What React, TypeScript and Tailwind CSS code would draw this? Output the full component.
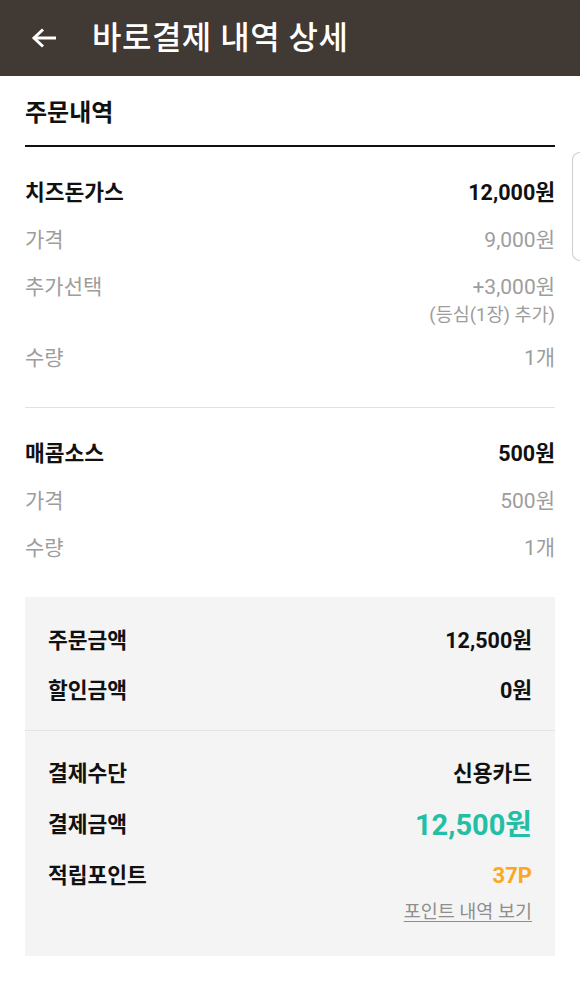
const FONT = "font-['Roboto','Noto_Sans_CJK_KR',sans-serif]"

interface Row {
  label: string
  value: string
  sub?: string
}

const ITEMS: { rows: Row[] }[] = [
  {
    rows: [
      { label: '치즈돈가스', value: '12,000원' },
      { label: '가격', value: '9,000원' },
      { label: '추가선택', value: '+3,000원', sub: '(등심(1장) 추가)' },
      { label: '수량', value: '1개' },
    ],
  },
  {
    rows: [
      { label: '매콤소스', value: '500원' },
      { label: '가격', value: '500원' },
      { label: '수량', value: '1개' },
    ],
  },
]

function ItemBlock({ rows, divider }: { rows: Row[]; divider?: boolean }) {
  return (
    <div className={`flex flex-col gap-[19px] pt-[32px] pb-[35px] ${divider ? 'border-b border-[#e2e2e2]' : ''}`}>
      {rows.map((r, i) => {
        const head = i === 0
        const tone = head ? 'text-[21.5px] font-bold text-[#111]' : 'text-[21px] text-[#9d9d9d]'
        return (
          <div key={i} className="flex justify-between items-start">
            <span className={`leading-[28px] ${tone}`}>{r.label}</span>
            <div className="flex flex-col items-end">
              <span className={`leading-[28px] ${tone}`}>{r.value}</span>
              {r.sub && (
                <span className="text-[18.5px] leading-[20px] mt-[4px] text-[#9d9d9d]">{r.sub}</span>
              )}
            </div>
          </div>
        )
      })}
    </div>
  )
}

export default function App() {
  return (
    <div className={`relative w-[580px] min-h-[989px] bg-white ${FONT}`}>
      {/* Top bar */}
      <header className="h-[76px] bg-[#413933] flex items-center pl-[31px]">
        <svg width="27" height="22" viewBox="0 0 27 22" fill="none" stroke="white" strokeWidth="3">
          <path d="M25 11H4" />
          <path d="M12 2.5 3 11l9 8.5" />
        </svg>
        <h1 className="ml-[34px] text-[32px] leading-none font-medium text-white tracking-[0.5px]">
          바로결제 내역 상세
        </h1>
      </header>

      <main className="px-[25px]">
        <div className="pt-[22px] pb-[17px] border-b-2 border-[#111]">
          <h2 className="text-[24px] leading-[30px] font-bold text-[#111]">주문내역</h2>
        </div>

        <ItemBlock rows={ITEMS[0].rows} divider />
        <ItemBlock rows={ITEMS[1].rows} />

        {/* Totals box */}
        <div className="bg-[#f4f4f4]">
          <div className="px-[23px] pt-[30px] pb-[25px] flex flex-col gap-[22px] border-b border-[#e4e4e4]">
            <div className="flex justify-between text-[21.5px] leading-[28px] font-bold text-[#111]">
              <span>주문금액</span>
              <span>12,500원</span>
            </div>
            <div className="flex justify-between text-[21.5px] leading-[28px] font-bold text-[#111]">
              <span>할인금액</span>
              <span>0원</span>
            </div>
          </div>
          <div className="px-[23px] pt-[29px] pb-[32px] flex flex-col">
            <div className="flex justify-between text-[21.5px] leading-[28px] font-bold text-[#111]">
              <span>결제수단</span>
              <span>신용카드</span>
            </div>
            <div className="mt-[20px] flex justify-between items-center">
              <span className="text-[21.5px] leading-[28px] font-bold text-[#111]">결제금액</span>
              <span className="text-[29px] leading-[34px] font-bold text-[#22bfa6]">12,500원</span>
            </div>
            <div className="mt-[20px] flex justify-between leading-[28px] font-bold">
              <span className="text-[21.5px] text-[#111]">적립포인트</span>
              <span className="text-[22px] text-[#f8a91f]">37P</span>
            </div>
            <div className="mt-[10px] flex justify-end">
              <a className="text-[18.5px] leading-[24px] text-[#8e8e8e] underline underline-offset-[3px]">
                포인트 내역 보기
              </a>
            </div>
          </div>
        </div>
      </main>

      <div className="h-[33px]" />
      <div className="border-t border-[#dedede]" />

      {/* scroll thumb overlay */}
      <div className="absolute right-0 top-[152px] w-[8px] h-[109px] rounded-l-[8px] border border-r-0 border-[#cfcfcf] bg-white" />
    </div>
  )
}
